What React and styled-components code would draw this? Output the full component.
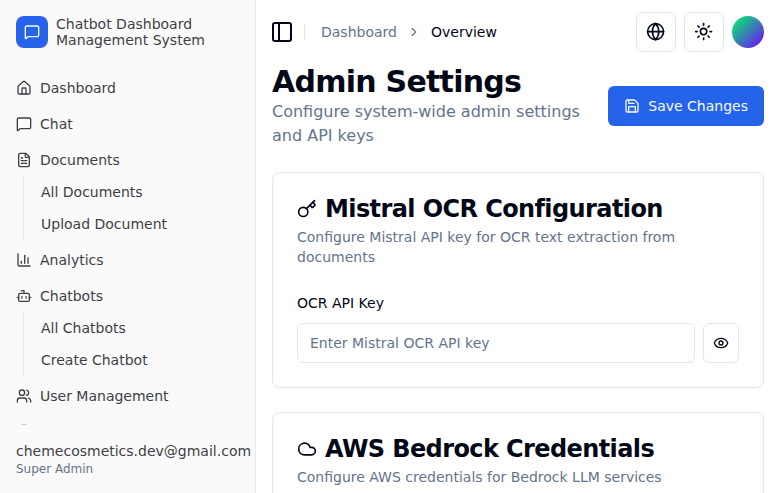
import React from "react";
import styled, { createGlobalStyle } from "styled-components";
import {
  MessageSquare, House, FileText, ChartColumn, Bot, Users, PanelLeft,
  ChevronRight, Globe, Sun, Save, Key, Cloud, Eye, ClipboardList,
} from "lucide-react";

const GlobalStyle = createGlobalStyle`
  *, *::before, *::after { box-sizing: border-box; }
  body {
    margin: 0;
    overflow: hidden;
    background: #fff;
    color: #020817;
    font-family: "DejaVu Sans", sans-serif;
    font-size: 14px;
    line-height: 20px;
  }
  h1, h2, p { margin: 0; }
  svg { flex-shrink: 0; display: block; }
  button, input { font: inherit; color: inherit; }
`;

const Layout = styled.div`
  display: flex;
  height: 493px;
  overflow: hidden;
`;

const Sidebar = styled.aside`
  width: 256px;
  flex-shrink: 0;
  display: flex;
  flex-direction: column;
  background: #fafafa;
  color: #3f3f46;
  border-right: 1px solid #e2e8f0;
`;

const Brand = styled.div`
  display: flex;
  align-items: center;
  gap: 8px;
  height: 64px;
  padding: 0 16px;
  line-height: 16px;
`;

const BrandMark = styled.div`
  width: 32px;
  height: 32px;
  display: grid;
  place-items: center;
  flex-shrink: 0;
  border-radius: 8px;
  background: #2563eb;
  color: #fafafa;
`;

const Nav = styled.nav`
  flex: 1;
  min-height: 0;
  overflow: hidden;
  display: flex;
  flex-direction: column;
  gap: 4px;
  padding: 8px 8px 0;
`;

const NavItem = styled.a`
  display: flex;
  align-items: center;
  gap: 8px;
  height: 32px;
  flex-shrink: 0;
  padding: 0 8px;
  white-space: nowrap;
`;

const SubNav = styled.div`
  display: flex;
  flex-direction: column;
  flex-shrink: 0;
  gap: 4px;
  margin: -4px 14px 0 15px;
  padding: 2px 10px;
  border-left: 1px solid #e2e8f0;
`;

const SubItem = styled.a`
  display: flex;
  align-items: center;
  height: 28px;
  padding: 0 7px;
`;

const Account = styled.footer`
  height: 68px;
  padding: 16px 0 0 16px;
  white-space: nowrap;
`;

const Role = styled.div`
  font-size: 12px;
  line-height: 16px;
  color: #64748b;
`;

const Main = styled.main`
  flex: 1;
  min-width: 0;
  overflow: hidden;
`;

const TopBar = styled.header`
  display: flex;
  align-items: center;
  height: 64px;
  padding: 0 16px 0 14px;
`;

const Divider = styled.span`
  width: 1px;
  height: 16px;
  margin: 0 16px 0 10px;
  background: #e2e8f0;
`;

const Crumbs = styled.div`
  display: flex;
  align-items: center;
  gap: 10px;
  color: #64748b;
`;

const Current = styled.span`
  color: #020817;
`;

const Actions = styled.div`
  display: flex;
  align-items: center;
  gap: 8px;
  margin-left: auto;
`;

const IconButton = styled.button`
  width: ${(p) => p.$width || 40}px;
  height: 40px;
  display: flex;
  align-items: center;
  justify-content: center;
  flex-shrink: 0;
  padding: 0;
  border: 1px solid #e2e8f0;
  border-radius: 6px;
  background: #fff;
`;

const Avatar = styled.div`
  width: 32px;
  height: 32px;
  border-radius: 50%;
  background: linear-gradient(135deg, #00ff66 0%, #7000ff 100%);
`;

const Content = styled.div`
  display: flex;
  flex-direction: column;
  gap: 24px;
  padding: 0 16px;
`;

const PageHead = styled.div`
  display: flex;
  align-items: center;
  justify-content: space-between;
  height: 84px;
`;

const PageTitle = styled.h1`
  font-size: 30px;
  line-height: 36px;
  font-weight: 700;
  letter-spacing: -0.75px;
`;

const Lead = styled.p`
  width: 320px;
  font-size: 16px;
  line-height: 24px;
  color: #64748b;
`;

const SaveButton = styled.button`
  display: flex;
  align-items: center;
  gap: 8px;
  height: 40px;
  flex-shrink: 0;
  padding: 0 16px;
  border: 0;
  border-radius: 6px;
  background: #2563eb;
  color: #f8fafc;
  white-space: nowrap;
`;

const Card = styled.section`
  padding: 24px;
  border: 1px solid #e2e8f0;
  border-radius: 8px;
  box-shadow: 0 1px 2px rgba(0, 0, 0, 0.05);
`;

const CardTitle = styled.h2`
  display: flex;
  align-items: center;
  gap: 8px;
  font-size: 24px;
  line-height: 24px;
  font-weight: 600;
  letter-spacing: -0.6px;
  white-space: nowrap;
`;

const CardText = styled.p`
  margin-top: 6px;
  color: #64748b;
`;

const Label = styled.label`
  display: block;
  margin-top: 29px;
  line-height: 14px;
`;

const FieldRow = styled.div`
  display: flex;
  gap: 8px;
  margin-top: 13px;
`;

const TextInput = styled.input`
  flex: 1;
  min-width: 0;
  height: 40px;
  padding: 8px 12px;
  border: 1px solid #e2e8f0;
  border-radius: 6px;
  background: #fff;
  &::placeholder { color: #64748b; opacity: 1; }
`;

export default function App() {
  return (
    <>
      <GlobalStyle />
      <Layout>
        <Sidebar>
          <Brand>
            <BrandMark><MessageSquare size={16} /></BrandMark>
            <div>Chatbot Dashboard<br />Management System</div>
          </Brand>
          <Nav>
            <NavItem><House size={16} />Dashboard</NavItem>
            <NavItem><MessageSquare size={16} />Chat</NavItem>
            <NavItem><FileText size={16} />Documents</NavItem>
            <SubNav>
              <SubItem>All Documents</SubItem>
              <SubItem>Upload Document</SubItem>
            </SubNav>
            <NavItem><ChartColumn size={16} />Analytics</NavItem>
            <NavItem><Bot size={16} />Chatbots</NavItem>
            <SubNav>
              <SubItem>All Chatbots</SubItem>
              <SubItem>Create Chatbot</SubItem>
            </SubNav>
            <NavItem><Users size={16} />User Management</NavItem>
            <NavItem><ClipboardList size={16} /></NavItem>
          </Nav>
          <Account>
            chemecosmetics.dev@gmail.com
            <Role>Super Admin</Role>
          </Account>
        </Sidebar>
        <Main>
          <TopBar>
            <PanelLeft size={24} />
            <Divider />
            <Crumbs>
              <span>Dashboard</span>
              <ChevronRight size={14} />
              <Current>Overview</Current>
            </Crumbs>
            <Actions>
              <IconButton><Globe size={19.2} /></IconButton>
              <IconButton><Sun size={19.2} /></IconButton>
              <Avatar />
            </Actions>
          </TopBar>
          <Content>
            <PageHead>
              <div>
                <PageTitle>Admin Settings</PageTitle>
                <Lead>Configure system-wide admin settings and API keys</Lead>
              </div>
              <SaveButton><Save size={16} />Save Changes</SaveButton>
            </PageHead>
            <Card>
              <CardTitle><Key size={20} />Mistral OCR Configuration</CardTitle>
              <CardText>Configure Mistral API key for OCR text extraction from documents</CardText>
              <Label htmlFor="ocr">OCR API Key</Label>
              <FieldRow>
                <TextInput id="ocr" placeholder="Enter Mistral OCR API key" />
                <IconButton $width={36}><Eye size={16} /></IconButton>
              </FieldRow>
            </Card>
            <Card>
              <CardTitle><Cloud size={20} />AWS Bedrock Credentials</CardTitle>
              <CardText>Configure AWS credentials for Bedrock LLM services</CardText>
            </Card>
          </Content>
        </Main>
      </Layout>
    </>
  );
}
